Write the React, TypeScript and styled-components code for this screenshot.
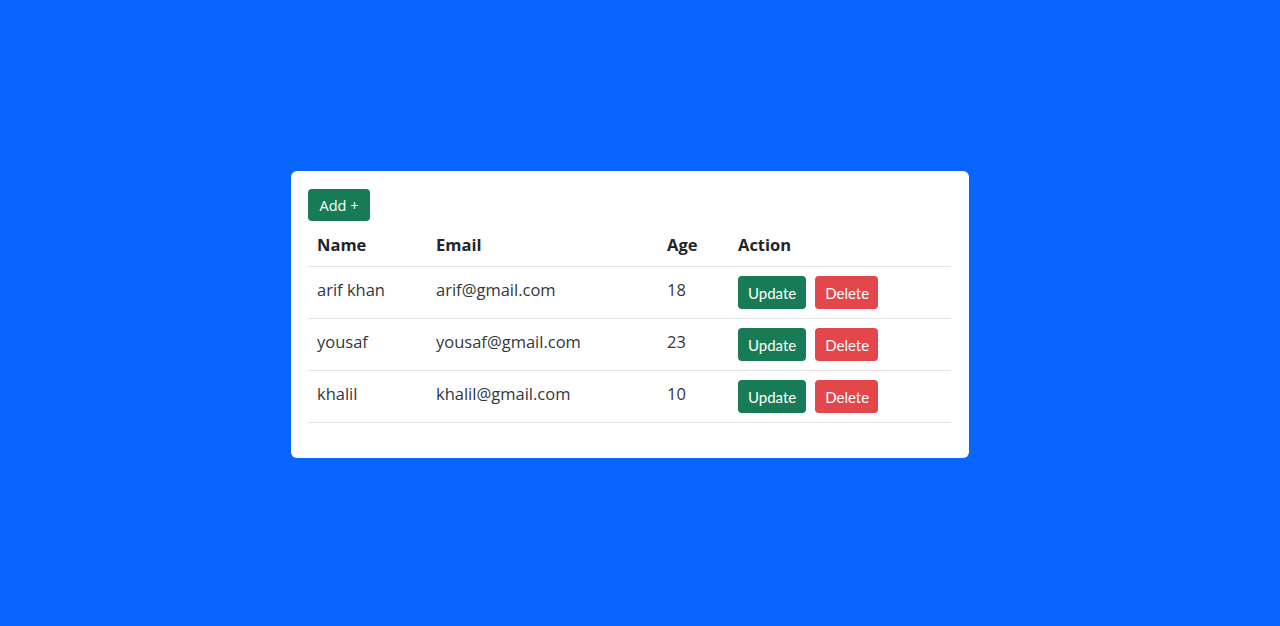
import React from "react";
import styled, { createGlobalStyle } from "styled-components";

const Global = createGlobalStyle`
  html, body { margin: 0; padding: 0; }
  body {
    background: #0866ff;
    font-family: "Open Sans", "Liberation Sans", sans-serif;
    color: #212529;
  }
`;

const Page = styled.div`
  width: 1280px;
  height: 626px;
  display: flex;
  justify-content: center;
  align-items: flex-start;
  padding: 171px 20px 0 0;
  box-sizing: border-box;
`;

const Card = styled.div`
  width: 678px;
  height: 287px;
  background: #fff;
  border-radius: 6px;
  box-sizing: border-box;
  padding: 18px 18px 0 17px;
`;

const Btn = styled.button<{ $variant: "success" | "danger" }>`
  font-family: "Lato", "Open Sans", sans-serif;
  font-size: 15px;
  color: #fff;
  border: none;
  border-radius: 4px;
  padding: 0 10px;
  height: 33px;
  cursor: pointer;
  background: ${(p) => (p.$variant === "success" ? "#177c55" : "#e3464b")};
`;

const DeleteBtn = styled(Btn)`
  padding: 0 9px 0 10px;
`;

const AddBtn = styled(Btn)`
  display: block;
  height: 32px;
  width: 62px;
  padding: 0;
  font-family: "Open Sans", sans-serif;
  font-size: 14.5px;
`;

const Table = styled.table`
  width: 643px;
  border-collapse: collapse;
  table-layout: fixed;
`;

const Th = styled.th<{ $w: number }>`
  box-sizing: border-box;
  width: ${(p) => p.$w}px;
  text-align: left;
  font-weight: 700;
  font-size: 16.5px;
  padding: 2px 9px 0;
  height: 45px;
  border-bottom: 1px solid #e2e4e7;
  vertical-align: middle;
`;

const Td = styled.td`
  box-sizing: border-box;
  font-size: 16.5px;
  color: #33373b;
  padding: 1px 9px 0;
  height: 52px;
  border-bottom: 1px solid #e2e4e7;
  vertical-align: middle;
`;

const TextCell = styled(Td)`
  padding-top: 0;
  padding-bottom: 6px;
`;

const Actions = styled.div`
  display: flex;
  gap: 9px;
`;

const users = [
  { name: "arif khan", email: "arif@gmail.com", age: 18 },
  { name: "yousaf", email: "yousaf@gmail.com", age: 23 },
  { name: "khalil", email: "khalil@gmail.com", age: 10 },
];

export default function App() {
  return (
    <>
      <Global />
      <Page>
        <Card>
          <AddBtn $variant="success">Add +</AddBtn>
          <Table>
            <thead>
              <tr>
                <Th $w={119}>Name</Th>
                <Th $w={231}>Email</Th>
                <Th $w={71}>Age</Th>
                <Th $w={222}>Action</Th>
              </tr>
            </thead>
            <tbody>
              {users.map((u) => (
                <tr key={u.email}>
                  <TextCell>{u.name}</TextCell>
                  <TextCell>{u.email}</TextCell>
                  <TextCell>{u.age}</TextCell>
                  <Td>
                    <Actions>
                      <Btn $variant="success">Update</Btn>
                      <DeleteBtn $variant="danger">Delete</DeleteBtn>
                    </Actions>
                  </Td>
                </tr>
              ))}
            </tbody>
          </Table>
        </Card>
      </Page>
    </>
  );
}
